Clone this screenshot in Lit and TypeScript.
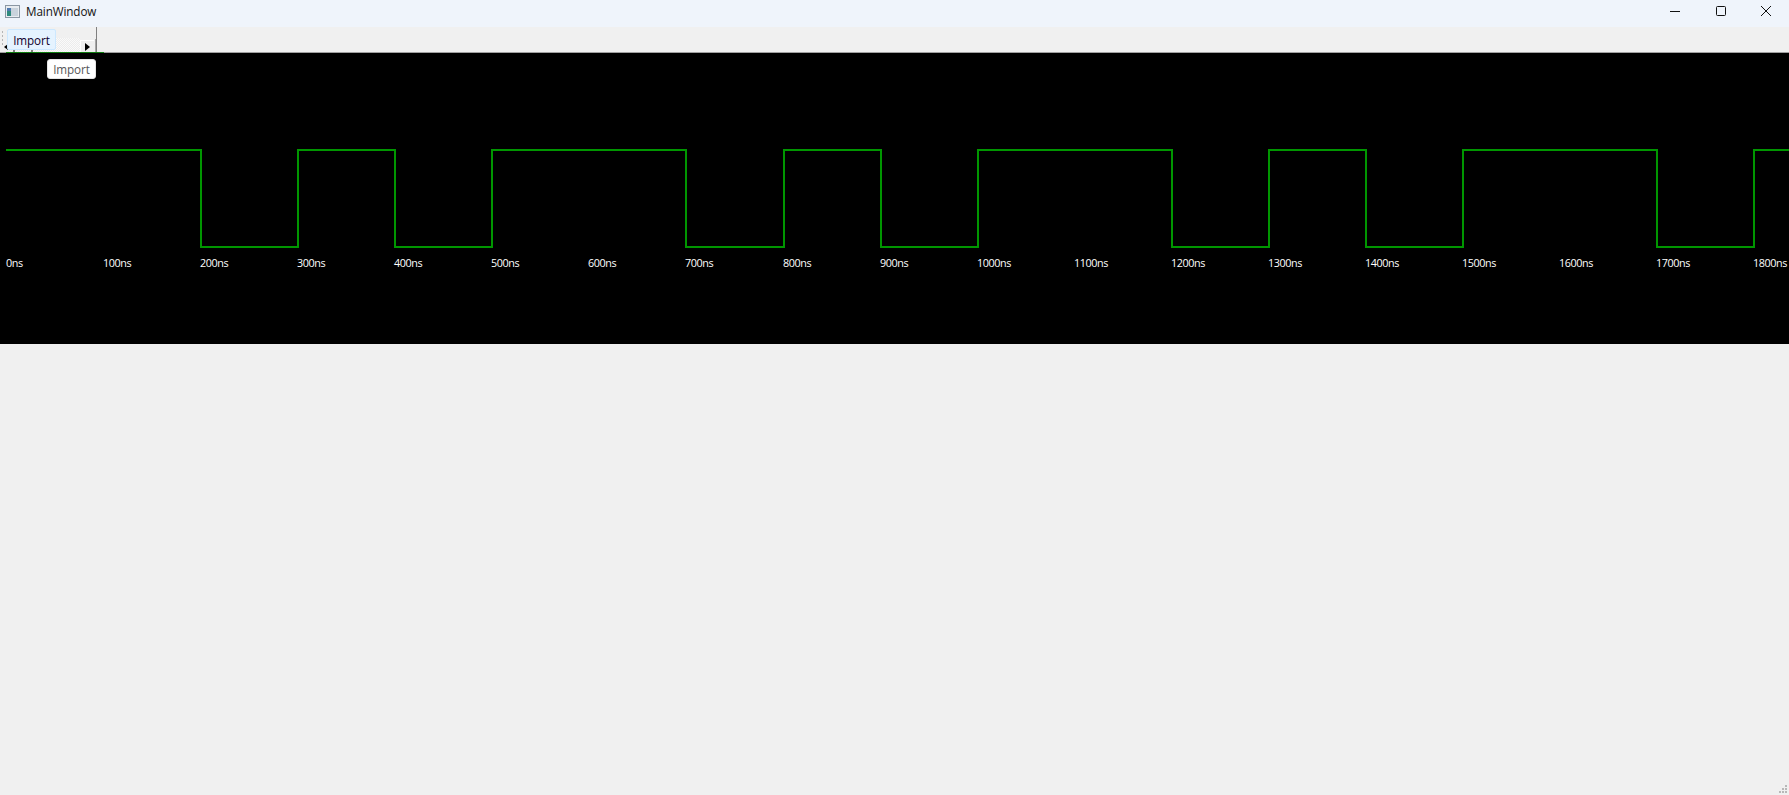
import { LitElement, html, css, svg } from "lit";
import { customElement } from "lit/decorators.js";

const X0 = 6;
const STEP = 97.07;
const HIGH = 150;
const LOW = 247;
// ns at which the level toggles, starting high at 0
const TOGGLES = [200, 300, 400, 500, 700, 800, 900, 1000, 1200, 1300, 1400, 1500, 1700, 1800];
const xAt = (ns: number) => Math.round(X0 + (ns / 100) * STEP) + 1;

function wavePoints(): string {
  const pts: string[] = [`${X0},${HIGH}`];
  let y = HIGH;
  for (const t of TOGGLES) {
    const x = xAt(t);
    pts.push(`${x},${y}`);
    y = y === HIGH ? LOW : HIGH;
    pts.push(`${x},${y}`);
  }
  pts.push(`1789,${y}`);
  return pts.join(" ");
}

const LABELS = Array.from({ length: 19 }, (_, i) => i * 100);

@customElement("app-root")
export class AppRoot extends LitElement {
  static styles = css`
    :host {
      display: flex;
      flex-direction: column;
      width: 1789px;
      height: 795px;
      background: #f0f0f0;
      font-family: "Open Sans", "Noto Sans", sans-serif;
      font-size: 12px;
      color: #000;
      overflow: hidden;
      position: relative;
    }
    .title {
      height: 27px;
      box-sizing: border-box;
      padding-bottom: 5px;
      flex: none;
      background: #eff4fb;
      display: flex;
      align-items: center;
    }
    .app-icon { margin-left: 5px; flex: none; }
    .title-text { margin-left: 6px; font-size: 11.7px; letter-spacing: -0.1px; flex: 1; color: #111; }
    .win-btn {
      width: 45.5px;
      height: 22px;
      display: flex;
      align-items: center;
      justify-content: center;
      flex: none;
    }
    .toolbar {
      flex: none;
      background: #f0f0f0;
      border-bottom: 1px solid #a0a0a0;
      box-sizing: border-box;
      height: 26px;
      position: relative;
    }
    .grip {
      position: absolute;
      left: 1px;
      top: 3px;
      width: 3px;
      height: 16px;
      background-image: radial-gradient(#b5b5b5 0.8px, transparent 0.9px);
      background-size: 3px 4px;
    }
    .strip {
      position: absolute;
      left: 8px;
      top: 11px;
      width: 72px;
      height: 14px;
      background: repeating-conic-gradient(#ececec 0 25%, #fafafa 0 50%) 0 0 / 2px 2px;
    }
    .tick { position: absolute; top: 23px; width: 2px; height: 2px; background: #808080; }
    .tick.a { left: 13px; }
    .tick.b { left: 31px; }
    .import-btn {
      position: absolute;
      left: 7px;
      top: 2px;
      width: 49px;
      height: 21px;
      box-sizing: border-box;
      background: #e5f3ff;
      border: 1px solid #cce8ff;
      border-radius: 2px;
      display: flex;
      align-items: center;
      justify-content: center;
      color: #10002a;
      font-size: 11.7px;
      letter-spacing: -0.1px;
    }
    .arrow-left {
      position: absolute;
      left: 4px;
      top: 17px;
      width: 0;
      height: 0;
      border: 3px solid transparent;
      border-right: 4px solid #000;
      border-left: 0;
    }
    .arrow-box {
      position: absolute;
      left: 80px;
      top: 13px;
      width: 14px;
      height: 12px;
      background: #f0f0f0;
      border-left: 1px solid #fff;
      border-top: 1px solid #fff;
      box-sizing: border-box;
    }
    .arrow-right {
      position: absolute;
      left: 4px;
      top: 2px;
      width: 0;
      height: 0;
      border: 4px solid transparent;
      border-left: 5px solid #000;
      border-right: 0;
    }
    .sep { position: absolute; left: 96px; top: 0; width: 1px; height: 25px; background: #808080; }
    .sep2 { position: absolute; left: 95px; top: 12px; width: 1px; height: 13px; background: #a8a8a8; }
    .canvas {
      height: 291px;
      flex: none;
      background: #000;
      position: relative;
    }
    .canvas svg { display: block; }
    .canvas text {
      fill: #fff;
      font-family: "Open Sans", "Noto Sans", sans-serif;
      font-size: 10.8px;
      letter-spacing: -0.4px;
    }
    .underline { position: absolute; left: 6px; top: -1px; width: 98px; height: 1px; background: #107c10; }
    .tooltip {
      position: absolute;
      left: 47px;
      top: 59px;
      width: 49px;
      height: 20px;
      box-sizing: border-box;
      background: #fff;
      border: 1px solid #e4e4e4;
      border-radius: 3px;
      display: flex;
      align-items: center;
      justify-content: center;
      color: #575757;
      font-size: 11.7px;
      letter-spacing: -0.1px;
    }
    .size-grip { position: absolute; right: 1px; bottom: 1px; }
  `;

  render() {
    return html`
      <div class="title">
        <svg class="app-icon" width="15" height="13" viewBox="0 0 15 13">
          <rect x="0.5" y="0.5" width="14" height="12" fill="#e8ecf0" stroke="#8b97a3" />
          <rect x="2" y="3" width="4" height="8" fill="#2f8a7e" />
          <rect x="2" y="3" width="4" height="3" fill="#4f7ab0" />
          <rect x="6" y="3" width="7" height="8" fill="#c9d3dc" />
        </svg>
        <span class="title-text">MainWindow</span>
        <div class="win-btn">
          <svg width="10" height="10" viewBox="0 0 10 10"><path d="M0 5.5H10" stroke="#111" fill="none" /></svg>
        </div>
        <div class="win-btn">
          <svg width="10" height="10" viewBox="0 0 10 10"><rect x="0.5" y="0.5" width="9" height="9" rx="1" stroke="#111" fill="none" /></svg>
        </div>
        <div class="win-btn">
          <svg width="10" height="10" viewBox="0 0 10 10"><path d="M0 0L10 10M10 0L0 10" stroke="#111" fill="none" /></svg>
        </div>
      </div>
      <div class="toolbar">
        <div class="grip"></div>
        <div class="strip"></div>
        <div class="tick a"></div>
        <div class="tick b"></div>
        <div class="arrow-left"></div>
        <div class="arrow-box"><div class="arrow-right"></div></div>
        <div class="sep2"></div>
        <div class="sep"></div>
        <div class="import-btn">Import</div>
      </div>
      <div class="canvas">
        <svg width="1789" height="291" viewBox="0 53 1789 291">
          <polyline points=${wavePoints()} fill="none" stroke="#009600" stroke-width="2" shape-rendering="crispEdges"></polyline>
          ${LABELS.map((ns) => svg`<text x=${Math.round(X0 + (ns / 100) * STEP)} y="267">${ns}ns</text>`)}
        </svg>
        <div class="underline"></div>
      </div>
      <div class="tooltip">Import</div>
      <svg class="size-grip" width="9" height="9" viewBox="0 0 9 9">
        <g fill="#b8b8b8">
          <rect x="6" y="0" width="2" height="2" /><rect x="3" y="3" width="2" height="2" /><rect x="6" y="3" width="2" height="2" />
          <rect x="0" y="6" width="2" height="2" /><rect x="3" y="6" width="2" height="2" /><rect x="6" y="6" width="2" height="2" />
        </g>
      </svg>
    `;
  }
}
